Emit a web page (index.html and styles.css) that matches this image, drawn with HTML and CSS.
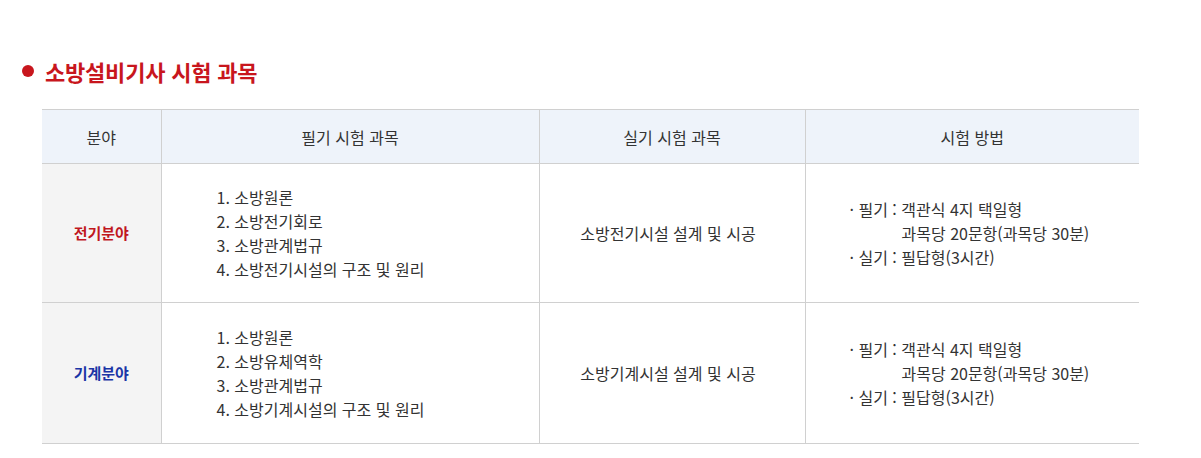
FILE: index.html
```html
<!DOCTYPE html>
<html lang="ko">
<head>
<meta charset="utf-8">
<link rel="stylesheet" href="styles.css">
</head>
<body>
<section class="exam">
  <h2 class="exam-title"><span class="dot"></span>소방설비기사 시험 과목</h2>
  <table class="exam-table">
    <colgroup>
      <col class="c1"><col class="c2"><col class="c3"><col class="c4">
    </colgroup>
    <thead>
      <tr><th>분야</th><th>필기 시험 과목</th><th>실기 시험 과목</th><th>시험 방법</th></tr>
    </thead>
    <tbody>
      <tr>
        <td class="field red">전기분야</td>
        <td class="subjects">
          <ol>
            <li>1. 소방원론</li>
            <li>2. 소방전기회로</li>
            <li>3. 소방관계법규</li>
            <li>4. 소방전기시설의 구조 및 원리</li>
          </ol>
        </td>
        <td class="practical">소방전기시설 설계 및 시공</td>
        <td class="method">
          <p>· 필기 : 객관식 4지 택일형</p>
          <p class="indent">과목당 20문항(과목당 30분)</p>
          <p>· 실기 : 필답형(3시간)</p>
        </td>
      </tr>
      <tr class="last">
        <td class="field blue">기계분야</td>
        <td class="subjects">
          <ol>
            <li>1. 소방원론</li>
            <li>2. 소방유체역학</li>
            <li>3. 소방관계법규</li>
            <li>4. 소방기계시설의 구조 및 원리</li>
          </ol>
        </td>
        <td class="practical">소방기계시설 설계 및 시공</td>
        <td class="method">
          <p>· 필기 : 객관식 4지 택일형</p>
          <p class="indent">과목당 20문항(과목당 30분)</p>
          <p>· 실기 : 필답형(3시간)</p>
        </td>
      </tr>
    </tbody>
  </table>
</section>
</body>
</html>
```

FILE: styles.css
```css
html, body {
  margin: 0;
  padding: 0;
  background: #fff;
}
body {
  font-family: "Noto Sans CJK KR", "Noto Sans", sans-serif;
  color: #333;
}
.exam {
  padding: 56px 0 0 22px;
}
.exam-title {
  margin: 0;
  display: flex;
  align-items: center;
  gap: 11px;
  font-size: 22px;
  line-height: 30px;
  font-weight: 700;
  color: #c8161d;
  letter-spacing: -0.2px;
}
.dot {
  width: 12px;
  height: 12px;
  border-radius: 50%;
  background: #c8161d;
  flex: none;
}
.exam-table {
  margin: 23px 0 0 20px;
  width: 1097px;
  border-collapse: collapse;
  table-layout: fixed;
  font-size: 16px;
}
.c1 { width: 119px; }
.c2 { width: 378px; }
.c3 { width: 266px; }
.c4 { width: 334px; }
.exam-table th {
  background: #eef3fa;
  font-weight: 400;
  height: 53px;
  padding: 0;
  border-top: 1px solid #d0d0d0;
  border-bottom: 1px solid #d0d0d0;
  text-align: center;
  color: #333;
}
.exam-table th + th,
.exam-table td + td {
  border-left: 1px solid #d0d0d0;
}
.exam-table td {
  border-bottom: 1px solid #d0d0d0;
  padding: 21px 0;
  vertical-align: middle;
  line-height: 24px;
}
.exam-table .last td {
  padding-top: 22px;
  padding-bottom: 22px;
}
.field {
  background: #f4f4f4;
  text-align: center;
  font-weight: 700;
  font-size: 15px;
}
.red { color: #c0171e; }
.blue { color: #1a35a6; }
.subjects ol {
  list-style: none;
  margin: 0;
  padding: 0 0 0 55px;
}
.exam-table .practical {
  text-align: center;
  padding-right: 8px;
}
.exam-table .method {
  padding-left: 44px;
}
.method p {
  margin: 0;
}
.method .indent {
  padding-left: 52px;
}
```
